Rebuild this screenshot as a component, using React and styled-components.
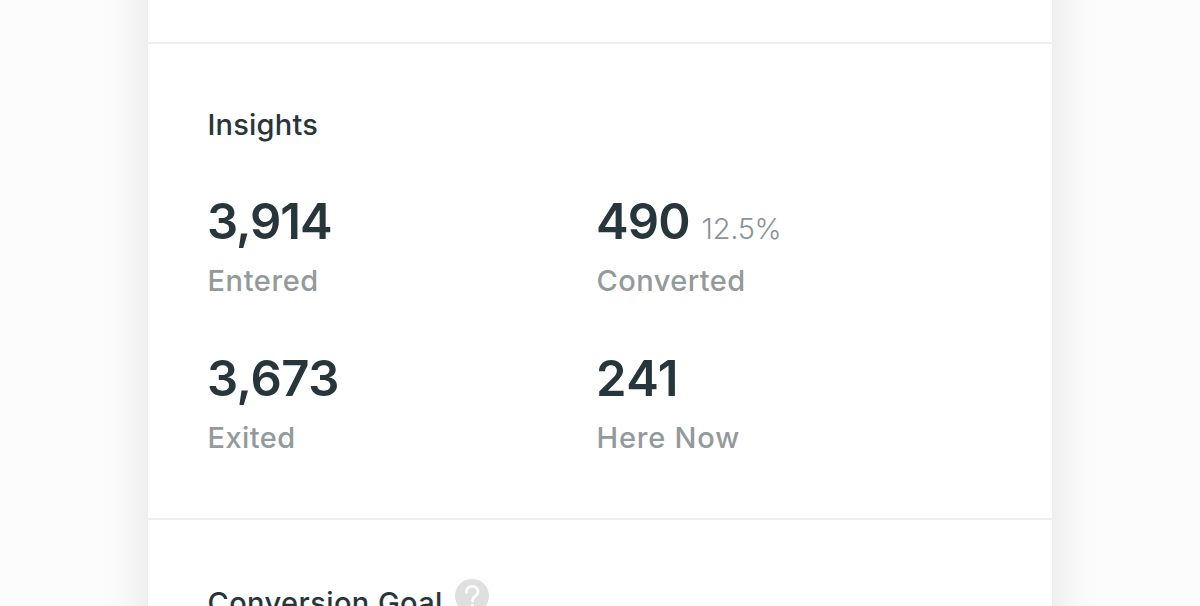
import React from "react";
import styled, { createGlobalStyle } from "styled-components";

const Global = createGlobalStyle`
  * { box-sizing: border-box; }
  html, body { margin: 0; height: 606px; overflow: hidden; background: #fcfcfc; }
  body { font-family: Inter, "Open Sans", sans-serif; color: #26363b; }
`;
const Page = styled.main`
  height: 606px;
  display: flex;
  justify-content: center;
  overflow: hidden;
`;
const Panel = styled.article`
  width: 904px;
  height: 760px;
  flex: none;
  margin-top: -80px;
  padding-top: 80px;
  background: #fff;
  box-shadow: 0 0 48px rgba(0, 0, 0, 0.11);
`;
const PreviousSection = styled.div`
  height: 42px;
`;
const Section = styled.section`
  height: ${(p) => p.$height}px;
  padding: ${(p) => p.$top}px 60px 0;
  border-top: 2px solid #efefef;
`;
const Title = styled.h2`
  width: max-content;
  margin: 0 0 0 -0.5px;
  font-size: 29px;
  font-weight: 500;
  line-height: 40px;
  white-space: nowrap;
  letter-spacing: ${(p) => p.$spacing || 0}px;
`;
const Grid = styled.dl`
  display: grid;
  grid-template-columns: 389px 389px;
  grid-template-rows: 157px 157px;
  margin: 47px 0 0;
`;
const Metric = styled.div`
  display: flex;
  flex-direction: column;
`;
const Value = styled.dd`
  display: flex;
  align-items: baseline;
  height: 60px;
  margin: 0 0 0 -1px;
  font-size: 49px;
  font-weight: 600;
  line-height: 60px;
  white-space: nowrap;
`;
const Number = styled.span`
  letter-spacing: ${(p) => p.$spacing || 0}px;
`;
const Percent = styled.span`
  margin-left: 12px;
  font-size: 29px;
  font-weight: 300;
  line-height: 40px;
  letter-spacing: -0.3px;
  color: #8b9495;
`;
const Label = styled.dt`
  order: 1;
  width: max-content;
  margin: 9px 0 0 -0.5px;
  font-size: 29px;
  font-weight: 500;
  line-height: 40px;
  color: #929a9b;
  letter-spacing: ${(p) => p.$spacing || 0}px;
`;
const GoalHeading = styled.div`
  display: flex;
  align-items: flex-start;
  gap: 12px;
`;
const Help = styled.svg`
  width: 34px;
  height: 34px;
  margin-top: -4px;
`;
const metrics = [
  { value: "3,914", label: "Entered", spacing: -1.1, labelSpacing: 0.6 },
  { value: "490", label: "Converted", percent: "12.5%", spacing: -0.9, labelSpacing: 0.45 },
  { value: "3,673", label: "Exited", spacing: -0.5, labelSpacing: 0.45 },
  { value: "241", label: "Here Now", spacing: 0.5, labelSpacing: 0.8 },
];
export default function App() {
  return (
    <Page>
      <Global />
      <Panel>
        <PreviousSection />
        <Section $height={476} $top={61}>
          <Title $spacing={0.2}>Insights</Title>
          <Grid>
            {metrics.map((m) => (
              <Metric key={m.label}>
                <Label $spacing={m.labelSpacing}>{m.label}</Label>
                <Value>
                  <Number $spacing={m.spacing}>{m.value}</Number>
                  {m.percent && <Percent>{m.percent}</Percent>}
                </Value>
              </Metric>
            ))}
          </Grid>
        </Section>
        <Section $height={160} $top={63}>
          <GoalHeading>
            <Title $spacing={0.42}>Conversion Goal</Title>
            <Help viewBox="0 0 34 34" aria-label="Help">
              <circle cx="17" cy="17" r="17" fill="#dfdfdf" />
              <path d="M11.3 13.2c0-3.6 2.5-5.8 5.8-5.8s5.9 2.1 5.9 5.4c0 4.2-5.5 4.3-5.5 8.2v1" fill="none" stroke="#fff" strokeWidth="2.8" strokeLinecap="round" />
              <circle cx="17.3" cy="26.5" r="1.6" fill="#fff" />
            </Help>
          </GoalHeading>
        </Section>
      </Panel>
    </Page>
  );
}
